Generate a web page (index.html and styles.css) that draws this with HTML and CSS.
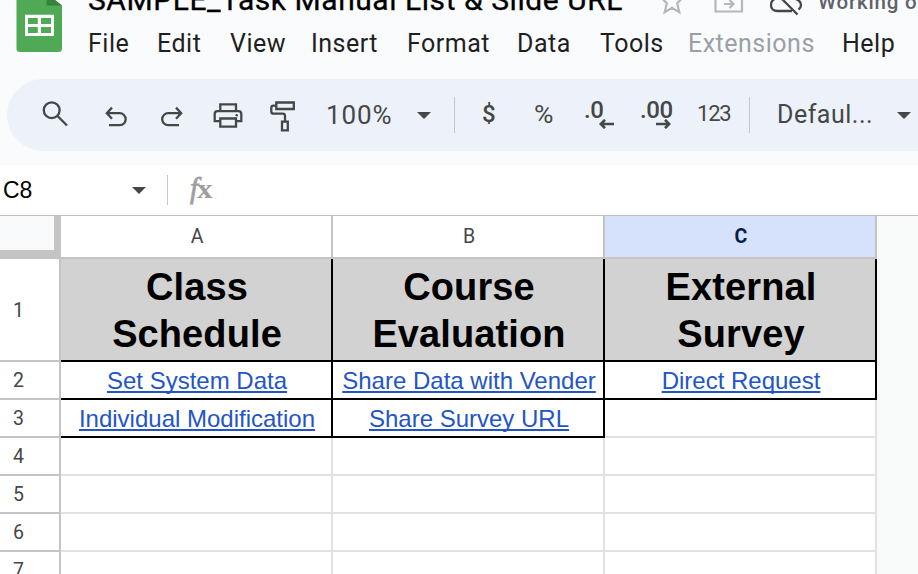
FILE: index.html
```html
<!DOCTYPE html>
<html lang="en">
<head>
<meta charset="utf-8">
<title>SAMPLE_Task Manual List &amp; Slide URL</title>
<link rel="stylesheet" href="styles.css">
</head>
<body>
<header class="header">
  <svg class="logo" viewBox="0 0 88 56" width="88" height="56">
    <path d="M16.500 0H55L62 5.500V48.500Q62 52 58.500 52H20Q16.500 52 16.500 48.500Z" fill="#4fa955"/>
    <path d="M46.500 0H55L62 5.500H46.500Z" fill="#37833b"/>
    <path d="M25 14.700H54V36H25ZM28 18V24H37.800V18ZM41 18V24H51V18ZM28 27V33H37.800V27ZM41 27V33H51V27Z" fill="#fff" fill-rule="evenodd"/>
  </svg>
  <div class="heading">
    <div class="title-row">
      <h1 class="title">SAMPLE_Task Manual List &amp; Slide URL</h1>
      <svg class="title-icons" viewBox="650 0 168 24" width="168" height="24" fill="none">
        <path d="M672 -11L675.300 -3L683 -2.500L677.200 3.200L679.300 12.200L672 7.800L664.700 12.200L666.800 3.200L661 -2.500L668.700 -3Z" stroke="#b7b7b7" stroke-width="2.200"/>
        <path d="M715.500 -5V11.500H742V-5M724 4H733M729.500 0L733.500 4L729.500 8" stroke="#b7b7b7" stroke-width="2.200"/>
        <path d="M776 -1.500C772.500 -.5 771 2 771 5C771 8.500 773.500 11 777.500 11H792M777 -6L797.500 14.500M792 -1.500C797 -1.500 801 1 801 5C801 7 800 8.500 798.500 9.500" stroke="#444746" stroke-width="2.300"/>
      </svg>
      <span class="status">Working o</span>
    </div>
    <nav class="menu">
      <span>File</span><span>Edit</span><span>View</span><span>Insert</span><span>Format</span><span>Data</span><span>Tools</span><span class="disabled">Extensions</span><span>Help</span>
    </nav>
  </div>
</header>

<div class="toolbar">
  <svg viewBox="36 79 60 72" width="60" height="72"><circle cx="51.700" cy="110.200" r="7.900"/><path d="M57.500 116L67 125.500"/></svg>
  <svg viewBox="96 79 56 72" width="56" height="72"><path d="M112 107.600L106.800 113.200L112 118.800M107.500 113.200H119.700A6 6 0 0 1 119.700 125.200H109"/></svg>
  <svg viewBox="152 79 54 72" width="54" height="72"><path d="M176 107.600L181.200 113.200L176 118.800M180.500 113.200H168.200A6 6 0 0 0 168.200 125.200H179"/></svg>
  <svg viewBox="206 79 56 72" width="56" height="72"><path d="M220.300 111V104.300H236V111M220 121.200H214.700V114Q214.700 111.200 217.500 111.200H238.500Q241.300 111.200 241.300 114V121.200H236.500M220.300 118.500H236V126.700H220.300Z"/><circle class="dot" cx="236.700" cy="115.200" r="1.200"/></svg>
  <svg viewBox="262 79 65 72" width="65" height="72"><path d="M276.300 102.500H293.800V109H276.300ZM276 105.700H273.500Q271.300 105.700 271.300 108V111.500Q271.300 113.700 273.500 113.700H282.700Q285 113.700 285 116V121M282 121.700H287.800V130.300H282Z"/></svg>
  <span class="zoom">100%</span>
  <i class="caret caret-zoom"></i>
  <i class="rule"></i>
  <span class="currency">$</span>
  <span class="percent">%</span>
  <div class="decimal">
    <span>.0</span>
    <svg viewBox="0 0 16 10" width="16" height="10"><path d="M15 5H2M6 .8L1.800 5L6 9.200"/></svg>
  </div>
  <div class="decimal more">
    <span>.00</span>
    <svg viewBox="0 0 16 10" width="16" height="10"><path d="M1 5H14M10 .8L14.200 5L10 9.200"/></svg>
  </div>
  <span class="number">123</span>
  <i class="rule"></i>
  <span class="font">Defaul...</span>
  <i class="caret"></i>
</div>

<div class="formula">
  <span class="cell-name">C8</span>
  <i class="caret"></i>
  <i class="divider"></i>
  <span class="fx"><i>f</i><b>x</b></span>
</div>

<main class="sheet">
  <div class="corner"></div><div class="col">A</div><div class="col">B</div><div class="col selected">C</div>
  <div class="row">1</div><div class="cell top">Class<br>Schedule</div><div class="cell top">Course<br>Evaluation</div><div class="cell top">External<br>Survey</div>
  <div class="row">2</div><div class="cell boxed"><a>Set System Data</a></div><div class="cell boxed"><a>Share Data with Vender</a></div><div class="cell boxed"><a>Direct Request</a></div>
  <div class="row">3</div><div class="cell boxed"><a>Individual Modification</a></div><div class="cell boxed"><a>Share Survey URL</a></div><div class="cell"></div>
  <div class="row">4</div><div class="cell"></div><div class="cell"></div><div class="cell"></div>
  <div class="row">5</div><div class="cell"></div><div class="cell"></div><div class="cell"></div>
  <div class="row">6</div><div class="cell"></div><div class="cell"></div><div class="cell"></div>
  <div class="row">7</div><div class="cell"></div><div class="cell"></div><div class="cell"></div>
</main>
</body>
</html>
```
FILE: styles.css
```css
* { box-sizing: border-box; }
body {
  margin: 0;
  width: 918px;
  height: 574px;
  overflow: hidden;
  background: #f9fbfd;
  font-family: Roboto, sans-serif;
  color: #1f1f1f;
}
svg { display: block; flex: none; }

.header { display: flex; height: 79px; overflow: hidden; }
.heading { width: 830px; flex: none; }
.title-row { display: flex; height: 24px; white-space: nowrap; }
.title {
  width: 562px;
  margin: -16px 0 0;
  font-size: 30px;
  font-weight: 400;
  line-height: 32px;
  letter-spacing: 0.55px;
  color: #000;
  -webkit-text-stroke: 0.3px #000;
}
.status {
  margin-top: -10px;
  font-size: 20.500px;
  line-height: 24px;
  font-weight: 500;
  letter-spacing: 0.8px;
  color: #5f6368;
}
.menu {
  display: grid;
  grid-template-columns: 69px 73px 81px 96px 110px 83px 88px 154px 76px;
  font-size: 25px;
  line-height: 40px;
  letter-spacing: 0.5px;
}
.disabled { color: #9aa0a6; }

.toolbar {
  display: grid;
  grid-template-columns: 60px 56px 54px 56px 64px 91px 37px 28px 52px 50px 56px 57px 52px 28px 120px 20px;
  align-items: center;
  height: 72px;
  margin-left: 7px;
  padding-left: 29px;
  background: #edf2fa;
  border-radius: 36px 0 0 36px;
  color: #444746;
  overflow: hidden;
}
.toolbar svg { fill: none; stroke: #444746; stroke-width: 2.3; }
.toolbar .dot { fill: #444746; stroke: none; }
.zoom { font-size: 26px; letter-spacing: 0.9px; }
.rule { width: 1px; height: 36px; background: #c7c7c7; }
.currency { margin-top: -2px; font-size: 24px; font-weight: 500; }
.percent { margin-top: -3px; font-size: 26.500px; }
.decimal { height: 72px; padding-top: 19px; font-size: 24px; line-height: 24px; font-weight: 500; letter-spacing: -0.4px; }
.decimal svg { margin: -3px 0 0 15px; stroke-width: 2.600; }
.number { margin-top: -3px; font-size: 22px; letter-spacing: -1.2px; }
.font { margin-top: -2px; font-size: 25px; letter-spacing: 0.5px; }
.caret {
  width: 0;
  border: 7.500px solid transparent;
  border-top-color: #444746;
  border-bottom: 0;
}

.formula {
  display: flex;
  align-items: center;
  height: 51px;
  margin-top: 14px;
  padding-left: 3px;
  background: #fff;
  border-bottom: 1px solid #c0c0c0;
}
.cell-name { width: 129px; font: 23px "Liberation Sans", sans-serif; color: #000; }
.divider { width: 1px; height: 30px; margin: 0 22px 0 21px; background: #c7c7c7; }
.fx { color: #9e9e9e; line-height: 30px; white-space: nowrap; }
.fx i { font: italic 29px "Liberation Serif", serif; -webkit-text-stroke: 0.8px #9e9e9e; }
.fx b { display: inline-block; margin-left: -1px; font: bold 27px "Liberation Serif", serif; transform: scaleX(1.15); transform-origin: left; }

.sheet {
  display: grid;
  grid-template-columns: 61px 272px 272px 272px;
  grid-template-rows: 43px 103px repeat(6, 38px);
  font-family: "Liberation Sans", sans-serif;
  background: #f8f9f9;
}
.corner { background: #f8f9fa; border: solid #c4c4c4; border-width: 0 7px 9px 0; }
.col, .row, .cell {
  display: flex;
  align-items: center;
  justify-content: center;
  border: solid #c4c4c4;
  border-width: 0 2px 2px 0;
  background: #fff;
  text-align: center;
}
.col, .row { font-family: Roboto, sans-serif; font-size: 19.500px; color: #444746; }
.col { padding-left: 2px; }
.row { padding: 1px 22px 0 0; }
.selected { background: #d6e1fb; color: #041e49; font-weight: bold; }
.cell { padding: 2px 0 0 2px; border-color: #e1e1e1; white-space: nowrap; }
.top { background: #d2d2d2; border-color: #000; font-size: 38px; line-height: 47px; font-weight: bold; letter-spacing: 0.1px; color: #000; }
.boxed { border-color: #000; font-size: 24px; color: #2455c6; }
.boxed a { text-decoration: underline; text-decoration-thickness: 2px; text-underline-offset: 2px; text-decoration-skip-ink: none; }
```
